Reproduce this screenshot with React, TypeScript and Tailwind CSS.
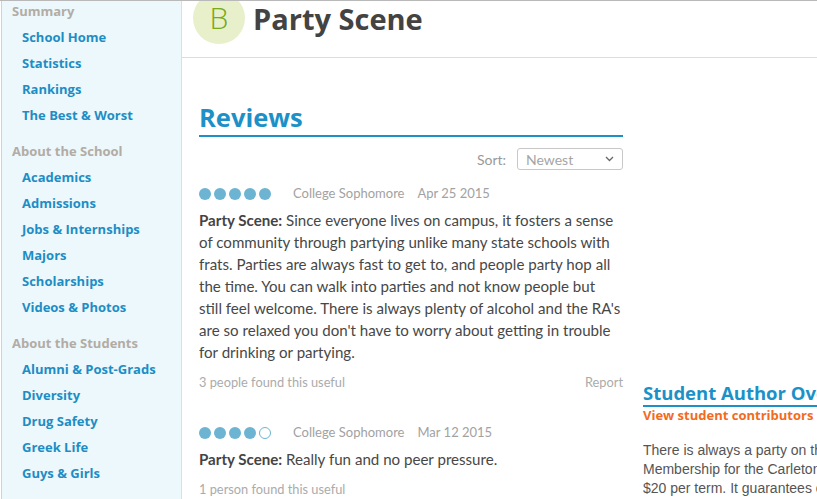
import React from 'react'

const sans = { fontFamily: '"Open Sans", "Liberation Sans", sans-serif' }

// Grupos del menú lateral
const menu = [
  { title: 'Summary', links: ['School Home', 'Statistics', 'Rankings', 'The Best & Worst'] },
  {
    title: 'About the School',
    links: ['Academics', 'Admissions', 'Jobs & Internships', 'Majors', 'Scholarships', 'Videos & Photos'],
  },
  { title: 'About the Students', links: ['Alumni & Post-Grads', 'Diversity', 'Drug Safety', 'Greek Life', 'Guys & Girls'] },
]

function Dots({ filled }: { filled: number }) {
  return (
    <div className="flex gap-[3px]">
      {[0, 1, 2, 3, 4].map((i) =>
        i < filled ? (
          <span key={i} className="w-[12px] h-[12px] rounded-full bg-[#6cb4d2]" />
        ) : (
          <span key={i} className="w-[12px] h-[12px] rounded-full border border-[#6cb4d2] bg-white" />
        )
      )}
    </div>
  )
}

function Review({
  filled,
  date,
  text,
  useful,
  report,
}: {
  filled: number
  date: string
  text: string
  useful: string
  report?: boolean
}) {
  return (
    <div className="font-['Lato',sans-serif]">
      <div className="flex items-center h-[24px] text-[13px] text-[#a2a2a2]">
        <Dots filled={filled} />
        <span className="ml-[22px]">College Sophomore</span>
        <span className="ml-[13px]">{date}</span>
      </div>
      <p className="mt-[3px] text-[15.1px] leading-[22px] text-[#474747]">
        <b className="font-bold text-[#444]">Party Scene:</b> {text}
      </p>
      <div className="flex justify-between mt-[9px] h-[22px] items-center text-[12.8px] text-[#ababab]">
        <span>{useful}</span>
        {report && <span>Report</span>}
      </div>
    </div>
  )
}

export default function App() {
  return (
    <div className="relative w-[817px] h-[499px] overflow-hidden bg-white flex">
      {/* borde de la barra superior */}
      <div className="absolute top-0 left-0 right-0 h-px bg-[#b9b9b9] z-10" />

      {/* Menú lateral */}
      <aside className="w-[181px] shrink-0 ml-px border-l border-[#b6dbeb] border-r border-r-[#dedede] bg-[#ecf8fc]" style={sans}>
        <div className="-mt-[2px]">
          {menu.map((g, gi) => (
            <div key={g.title} className={gi > 0 ? 'mt-[10px]' : ''}>
              <div className="h-[26px] leading-[26px] pl-[10px] text-[13px] font-bold text-[#b3aca4]">{g.title}</div>
              {g.links.map((l) => (
                <div key={l} className="h-[26px] leading-[26px] pl-[20px] text-[13px] font-bold text-[#1d8dc5]">
                  {l}
                </div>
              ))}
            </div>
          ))}
        </div>
      </aside>

      {/* Contenido principal */}
      <main className="flex-1 min-w-0">
        <header className="-mt-[22px] h-[80px] flex items-center border-b border-[#dddddd]" style={sans}>
          <div className="ml-[11px] w-[52px] h-[52px] rounded-full bg-[#e7f0ca] flex items-center justify-center text-[30px] font-light text-[#78a81c]">
            B
          </div>
          <h1 className="ml-[8px] mt-[2px] text-[29px] font-bold text-[#434343]">Party Scene</h1>
        </header>

        <div className="flex">
          <section className="ml-[17px] w-[424px] shrink-0">
            <h2 className="mt-[42px] pb-[1px] text-[25.5px] leading-[34px] font-bold text-[#1b91c8] border-b-2 border-[#1b91c8]" style={sans}>
              Reviews
            </h2>
            <div className="flex justify-end items-center mt-[11px] font-['Lato',sans-serif]">
              <span className="text-[14px] text-[#999]">Sort:</span>
              <div className="ml-[11px] w-[106px] h-[22px] border border-[#c8c8c8] rounded-[3px] flex items-center justify-between px-[8px]">
                <span className="text-[14px] text-[#a5a5a5]">Newest</span>
                <svg width="9" height="6" viewBox="0 0 9 6">
                  <path d="M1 1l3.5 3.5L8 1" fill="none" stroke="#666" strokeWidth="1.3" />
                </svg>
              </div>
            </div>

            <div className="mt-[12px]">
              <Review
                filled={5}
                date="Apr 25 2015"
                text={
                  "Since everyone lives on campus, it fosters a sense of community through partying unlike many state schools with frats. Parties are always fast to get to, and people party hop all the time. You can walk into parties and not know people but still\u00a0feel welcome. There is always plenty of alcohol and the RA's are so relaxed you don't have to worry about getting in trouble for drinking or partying."
                }
                useful="3 people found this useful"
                report
              />
            </div>
            <div className="mt-[27px]">
              <Review
                filled={4}
                date="Mar 12 2015"
                text="Really fun and no peer pressure."
                useful="1 person found this useful"
              />
            </div>
          </section>

          {/* Columna derecha (recortada por el borde de la ventana) */}
          <aside className="ml-[20px] w-[300px] shrink-0 pt-[323px]">
            <h3 className="text-[18.5px] leading-[24px] font-bold text-[#1b91c8] border-b-2 border-[#1b91c8] whitespace-nowrap" style={sans}>
              Student Author Overview
            </h3>
            <div className="text-[13px] leading-[16px] font-bold text-[#f26b1f] whitespace-nowrap" style={sans}>
              View student contributors
            </div>
            <p className="mt-[18px] text-[14px] leading-[19px] text-[#555] whitespace-nowrap font-['Liberation_Sans',Arial,sans-serif]">
              There is always a party on the weekends.
              <br />
              Membership for the Carleton Social Club is
              <br />
              $20 per term. It guarantees entry to events.
            </p>
          </aside>
        </div>
      </main>
    </div>
  )
}
